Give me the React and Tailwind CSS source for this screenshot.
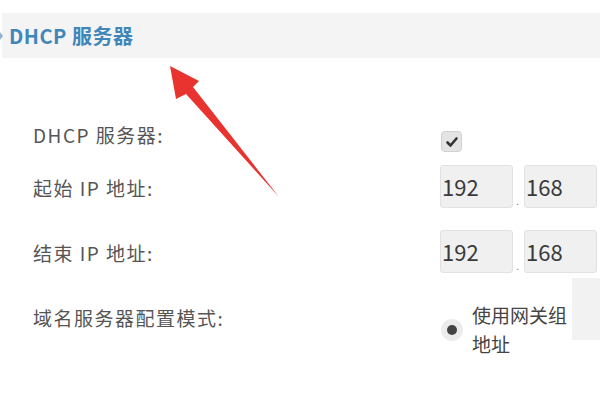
const font = { fontFamily: '"Noto Sans CJK SC", "Noto Sans", sans-serif' }

function IpBox({ value }) {
  return (
    <div className="w-[73px] h-[43px] shrink-0 bg-[#f0f0f0] border border-[#e2e2e2] rounded-[3px] flex items-center pl-[1px] text-[22px] tracking-normal text-[#3a3a3a]">
      {value}
    </div>
  )
}

function Dot() {
  return <span className="w-[11px] shrink-0 text-center text-[#777] text-[10px] leading-none pb-[2px]">.</span>
}

function IpRow() {
  return (
    <div className="flex items-end shrink-0">
      <IpBox value="192" />
      <Dot />
      <IpBox value="168" />
      <Dot />
    </div>
  )
}

export default function App() {
  return (
    <div className="relative w-[600px] h-[400px] overflow-hidden bg-white" style={font}>
      <div className="pt-[13px]">
        <div className="ml-[2px] h-[45px] bg-[#f4f4f5] flex items-center">
          <span className="w-0 h-0 border-y-[4px] border-y-transparent border-l-[3px] border-l-[#8fb3cf] -ml-[2px]"></span>
          <span className="ml-[6px] text-[20px] tracking-[0.5px] font-bold text-[#3f86b9]">DHCP 服务器</span>
        </div>
      </div>

      <div className="flex flex-col pl-[33px] text-[19px] tracking-[1.5px] text-[#555]">
        <div className="mt-[73px] flex items-center h-[21px]">
          <div className="w-[408px] shrink-0 -mt-[12px]">DHCP 服务器:</div>
          <div className="w-[21px] h-[21px] rounded-[4px] bg-[#e4e4e4] border border-[#d0d0d0] flex items-center justify-center">
            <svg width="14" height="14" viewBox="0 0 14 14">
              <path d="M2.5 7.5 L5.5 10.5 L11.5 3.5" fill="none" stroke="#333" strokeWidth="2.6" strokeLinecap="round" strokeLinejoin="round" />
            </svg>
          </div>
        </div>

        <div className="mt-[13px] flex items-center">
          <div className="w-[407px] shrink-0 pt-[3px]">起始 IP 地址:</div>
          <IpRow />
        </div>

        <div className="mt-[22px] flex items-center">
          <div className="w-[407px] shrink-0 pt-[3px]">结束 IP 地址:</div>
          <IpRow />
        </div>

        <div className="mt-[27px] flex items-start">
          <div className="w-[408px] shrink-0 pt-[4px]">域名服务器配置模式:</div>
          <div className="w-[22px] h-[22px] mt-[19px] rounded-full bg-[#ececec] flex items-center justify-center shrink-0">
            <span className="w-[10px] h-[10px] rounded-full bg-[#444]"></span>
          </div>
          <div className="ml-[9px] w-[100px] shrink-0 text-[19px] tracking-normal leading-[29px] text-[#444]">使用网关组地址</div>
          <div className="ml-auto mt-[-22px] w-[29px] h-[62px] shrink-0 bg-[#f2f2f2]"></div>
        </div>
      </div>

      <svg className="absolute left-0 top-0" width="600" height="400">
        <polygon points="170,66 199,81 193,87 279,197 186,94 176,99" fill="#e8332f" />
      </svg>
    </div>
  )
}
